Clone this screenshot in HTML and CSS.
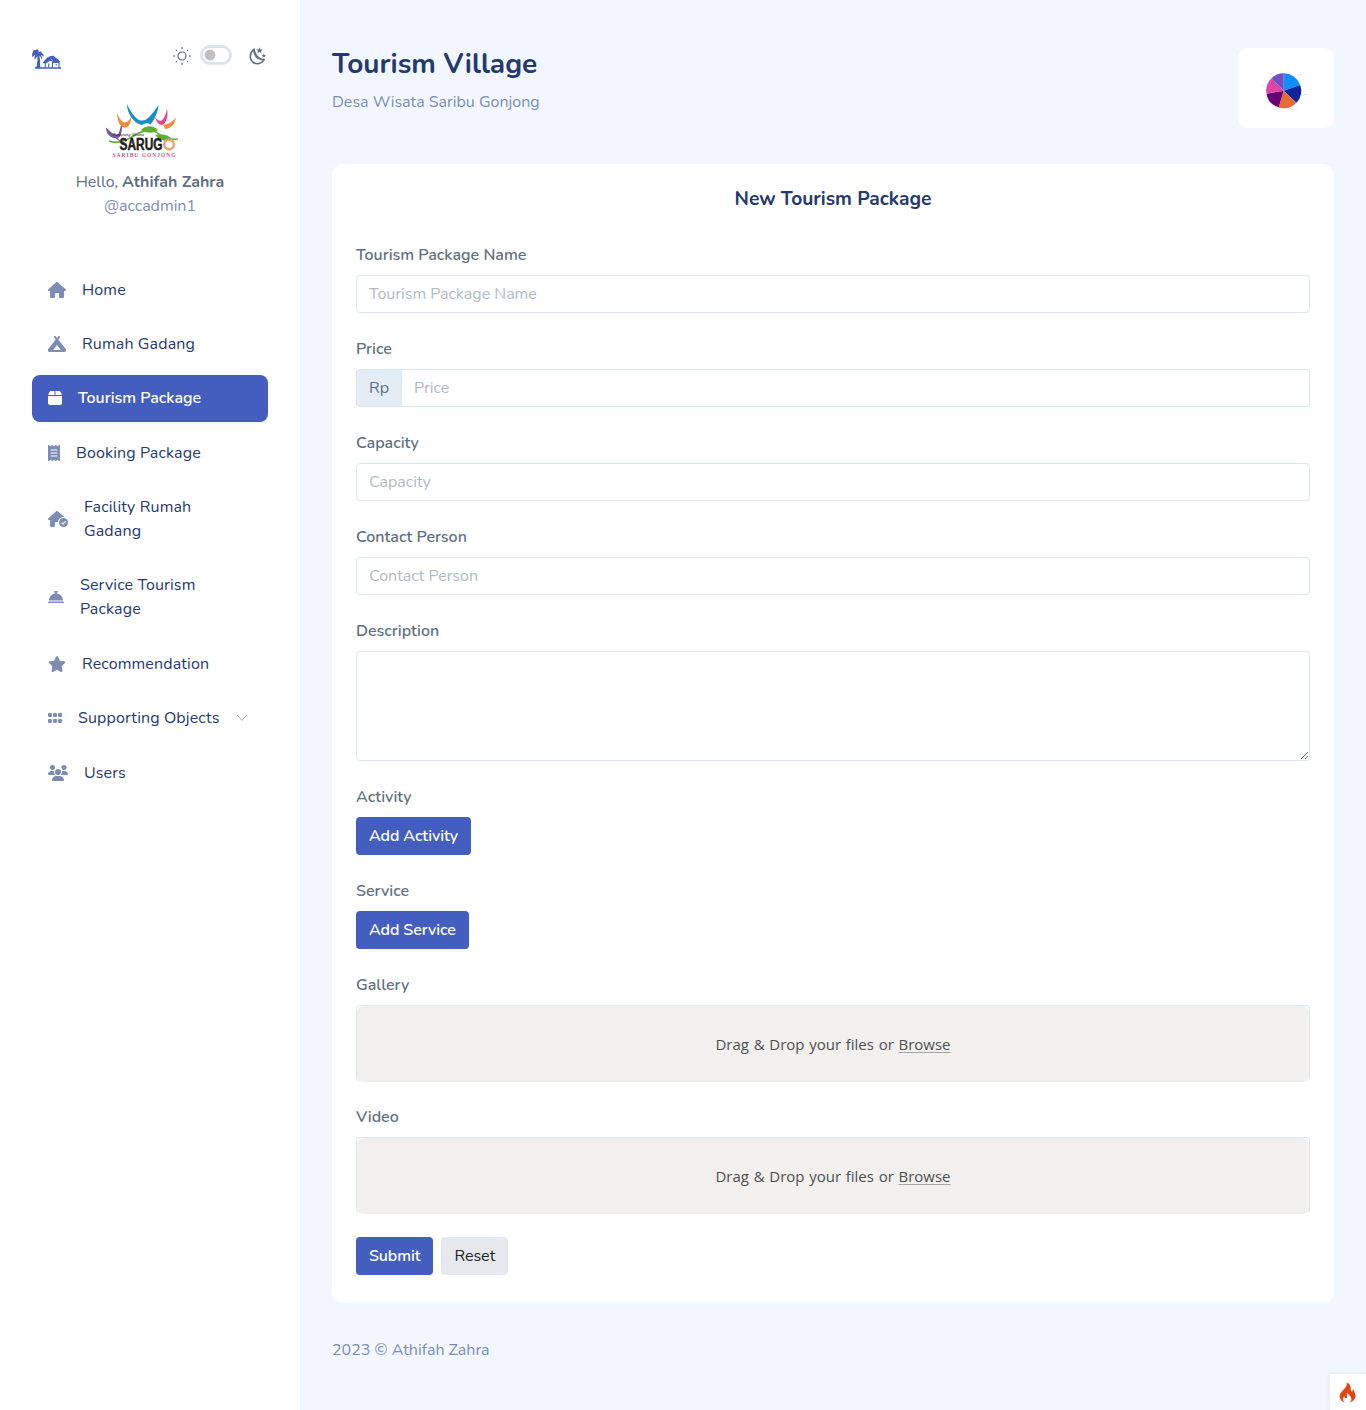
FILE: index.html
```html
<!DOCTYPE html>
<html lang="en">
<head>
<meta charset="utf-8">
<title>New Tourism Package</title>
<link rel="stylesheet" href="styles.css">
</head>
<body>
<div class="app">
  <aside class="sidebar">
    <div class="brand-row">
      <svg class="brand" width="30" height="20" viewBox="0 0 30 20">
        <path d="M6.500 3.500C7.500.3 5 0 3.600 1.200 2 .6.6 2 .9 3.400-.4 4.600-.2 6.800.8 8.600 1.300 7.200 2 6.300 3.400 5.800 2.300 7.500 2.300 9 2.900 10.800 3.600 9.200 4.600 8 5.300 7.200L5.600 11 4.500 18H3v1.800h26V18.300H8.300L8 11 7.300 6.800c1.300.6 2 2 2.300 3.600C10.400 9 10.200 7.300 9 6.200c1.200 0 2 .6 2.700 1.500C12 5.600 10.800 4.300 9.200 4.100 10.600 3 9.500 1.200 6.500 3.500Z"/>
        <path d="M11 13.200 15 8.800 18.500 7l2.800-.2L27.800 12v1.200H22l-3-3.900-4.800 4.900H11z"/>
        <path fill="none" stroke="#435ebe" stroke-width="1.100" d="M13.300 13v5.500M14 13.800l4.500-3.500 3.700 3.500M22 13.500h5V19M20.500 13v5.500M16.800 18.500v-4M24.200 15v1.500"/>
      </svg>
      <div class="theme">
        <svg width="20" height="20" viewBox="0 0 20 20" fill="none" stroke="#607080" stroke-width="1.200"><circle cx="10" cy="10" r="4"/><path d="M10 .9v2.300M10 16.800v2.300M.9 10h2.300M16.800 10h2.300M4 4l.9.9M15.100 15.100l.9.9M4 16l.9-.9M15.100 4.900 16 4"/></svg>
        <span class="switch"></span>
        <svg class="moon" width="18" height="18" viewBox="0 0 18 18"><path fill="none" stroke="#607080" stroke-width="1.600" stroke-linejoin="round" d="M5.300 2.200C4 8 8.500 13 15.300 12.600 12.800 16.800 7.500 18 3.700 15 .1 11.900.5 5.300 5.300 2.200ZM5.200 3.500C6 7.500 8.500 11 13 12.500"/><path fill="#607080" d="m10.500.3.9 2.100 2.300.2-1.700 1.500.5 2.200-2-1.200-2 1.200.5-2.200-1.700-1.500 2.300-.2zM14.800 6.500l.6 1.400 1.600.2-1.200 1 .4 1.500-1.400-.8-1.300.8.3-1.500-1.100-1 1.500-.2z"/></svg>
      </div>
    </div>
    <div class="profile">
      <svg width="76" height="56" viewBox="0 0 76 56">
        <path fill="#715aa8" d="M1 25.500C4 28 8 33 12 32.500 15 32 14.500 26 17 21 17 28 17 34.500 13 36 7 37.500 1 33 1 25.500ZM11 34l7 8-9-7z"/>
        <path fill="#f28b3c" d="M12 11C14 16 17 21 20.500 20.500 23 20 24 18 26 15.500 26 20 24.500 24.500 21 25.500 15 26.500 12 18 12 11Z"/>
        <path fill="#168fc9" d="M22 2C25 9 29 15 34 18c5 1.500 8-.5 11-4 3-3 5.500-7 8.500-11C53 11 49 18 45.500 22.500 43 20.500 40 21 37 23 28 21 22 11 22 2Z"/>
        <path fill="#e84586" d="M50 15c2 3 4 4.500 6.500 3.500C59 17 61 12 62 7c1.500 6-.5 14-4.500 16C54 23 51 20 50 15Z"/>
        <path fill="#f28b3c" d="M58 22.500C63 23 67 20 71 15.500 70 22 66 27 60 27z"/>
        <path fill="none" stroke="#61ae32" stroke-width="1.700" d="M4 39c10 4 20-2 28-7 11-6 18-5 24 2 4 4 10 4 17 3"/>
        <path fill="#61ae32" d="M36 28c5-5 12-5 17 0-3 3-11 4-17 0ZM50 33c8-2 14 0 18 5-7 2-14 0-18-5Z"/>
        <text class="logo-small" x="8" y="33.500" textLength="31" lengthAdjust="spacingAndGlyphs">Kampung Wisata</text>
        <text class="logo-name" x="14.500" y="48" textLength="43" lengthAdjust="spacingAndGlyphs">SARUG</text>
        <circle cx="64" cy="42.500" r="4.800" fill="none" stroke="#f2a070" stroke-width="2.500"/>
        <text class="logo-sub" x="7.500" y="54.500" textLength="63">SARIBU GONJONG</text>
      </svg>
      <p>Hello, <b>Athifah Zahra</b></p>
      <p class="muted">@accadmin1</p>
    </div>
    <nav class="menu">
      <a><svg width="18" height="16" viewBox="0 0 576 512"><path d="M575.800 255.500c0 18-15 32.100-32 32.100h-32l.7 160.200V472c0 22.100-17.900 40-40 40H392c-22.100 0-40-17.900-40-40v-88c0-17.700-14.300-32-32-32h-64c-17.700 0-32 14.300-32 32v88c0 22.100-17.900 40-40 40h-80c-22.100 0-40-17.900-40-40V287.600H32c-18 0-32-14-32-32.100 0-9 3-17 10-24L266.400 8c7-7 15-8 22-8s15 2 21 7l255.400 224.500c8 7 12 15 11 24z"/></svg><span>Home</span></a>
      <a><svg width="18" height="16" viewBox="0 0 576 512"><path d="M377 52c11-13.800 8.800-33.900-5-45s-33.900-8.800-45 5l-39 48.800L249 12c-11-13.800-31.200-16-45-5s-16 31.200-5 45l48 60L12.300 405.400C4.300 415.400 0 427.700 0 440.400V464c0 26.500 21.500 48 48 48h480c26.500 0 48-21.500 48-48v-23.600c0-12.700-4.300-25.100-12.300-35L329 112l48-60zM288 448H168.500L288 291.700 407.500 448H288z"/></svg><span>Rumah Gadang</span></a>
      <a class="active"><svg width="14" height="16" viewBox="0 0 448 512"><path d="M50.700 58.500 0 160h208V32H93.700c-18.200 0-34.800 10.300-43 26.500zM240 160h208L397.300 58.500c-8.200-16.200-24.800-26.500-43-26.500H240v128zm208 32H0v224c0 35.300 28.700 64 64 64h320c35.300 0 64-28.700 64-64V192z"/></svg><span>Tourism Package</span></a>
      <a><svg width="12" height="16" viewBox="0 0 384 512"><path d="M14 2.200C22.500-1.700 32.500-.3 39.600 5.800L80 40.400l40.400-34.600c9-7.700 22.300-7.700 31.200 0L192 40.400l40.400-34.600c9-7.700 22.300-7.700 31.200 0L304 40.400l40.400-34.600c7.100-6.100 17.100-7.500 25.600-3.600s14 12.400 14 21.800v464c0 9.400-5.500 17.900-14 21.800s-18.500 2.500-25.600-3.600L304 471.600l-40.400 34.600c-9 7.700-22.300 7.700-31.200 0L192 471.600l-40.400 34.600c-9 7.700-22.300 7.700-31.200 0L80 471.600l-40.400 34.600c-7.100 6.100-17.100 7.500-25.600 3.600S0 497.400 0 488V24C0 14.600 5.500 6.100 14 2.200zM96 144c-8.800 0-16 7.200-16 16s7.200 16 16 16h192c8.800 0 16-7.200 16-16s-7.200-16-16-16H96zM80 352c0 8.800 7.200 16 16 16h192c8.800 0 16-7.200 16-16s-7.200-16-16-16H96c-8.800 0-16 7.200-16 16zM96 240c-8.800 0-16 7.200-16 16s7.200 16 16 16h192c8.800 0 16-7.200 16-16s-7.200-16-16-16H96z"/></svg><span>Booking Package</span></a>
      <a class="narrow"><svg width="20" height="16" viewBox="0 0 640 512"><path d="M320 368c0-97 79-176 176-176 10 0 20 1 30 3L309 7c-13-10-29-10-42 0L10 231c-18 18-9 57 22 57h32v184c0 22 18 40 40 40h80c22 0 40-18 40-40v-88c0-18 14-32 32-32h64z"/><path fill-rule="evenodd" d="M496 224a144 144 0 1 1 0 288 144 144 0 1 1 0-288Zm56 97-72 72-33-33-23 23 56 56 95-95z"/></svg><span>Facility Rumah Gadang</span></a>
      <a><svg width="16" height="16" viewBox="0 0 512 512"><path d="M216 64c-13.300 0-24 10.700-24 24s10.700 24 24 24h16v33.300C119.600 157.200 32 252.400 32 368h448c0-115.600-87.600-210.800-200-222.700V112h16c13.300 0 24-10.700 24-24s-10.700-24-24-24h-80zM24 400c-13.300 0-24 10.700-24 24s10.700 24 24 24h464c13.300 0 24-10.700 24-24s-10.700-24-24-24H24z"/></svg><span>Service Tourism Package</span></a>
      <a><svg width="18" height="16" viewBox="0 0 576 512"><path d="M316.900 18C311.600 7 300.400 0 288.100 0s-23.400 7-28.800 18L195 150.300 51.400 171.500c-12 1.800-22 10.200-25.700 21.700s-.7 24.200 7.900 32.700L137.800 329l-24.600 145.700c-2 12 3 24.200 12.900 31.300s23 8 33.800 2.300l128.300-68.500 128.300 68.500c10.800 5.700 23.900 4.900 33.800-2.300s14.900-19.300 12.900-31.300L438.500 329l104.200-103.100c8.600-8.500 11.700-21.200 7.900-32.700s-13.700-19.900-25.700-21.700l-143.700-21.200L316.900 18z"/></svg><span>Recommendation</span></a>
      <a><svg width="14" height="16" viewBox="0 0 448 512"><rect y="96" width="128" height="128" rx="40"/><rect x="160" y="96" width="128" height="128" rx="40"/><rect x="320" y="96" width="128" height="128" rx="40"/><rect y="288" width="128" height="128" rx="40"/><rect x="160" y="288" width="128" height="128" rx="40"/><rect x="320" y="288" width="128" height="128" rx="40"/></svg><span>Supporting Objects</span><svg class="chevron" width="12" height="12" viewBox="0 0 12 12"><path d="m1 3 5 5.300L11 3"/></svg></a>
      <a><svg width="20" height="16" viewBox="0 0 640 512"><path d="M144 0a80 80 0 1 1 0 160A80 80 0 1 1 144 0zM512 0a80 80 0 1 1 0 160A80 80 0 1 1 512 0zM0 298.700C0 239.800 47.800 192 106.700 192h42.700c15.900 0 31 3.500 44.600 9.700-1.300 7.200-1.900 14.700-1.900 22.300 0 38.200 16.800 72.500 43.300 96H21.300C9.600 320 0 310.400 0 298.700zM405.300 320c26-23.500 42.600-57.800 42.600-96 0-7.600-.7-15-1.900-22.300 13.600-6.300 28.700-9.700 44.600-9.700h42.700C592.200 192 640 239.800 640 298.700c0 11.800-9.600 21.300-21.300 21.300H405.300zM224 224a96 96 0 1 1 192 0 96 96 0 1 1-192 0zM128 485.300C128 411.700 187.700 352 261.300 352h117.400C452.300 352 512 411.700 512 485.300c0 14.700-11.900 26.700-26.700 26.700H154.700c-14.700 0-26.700-11.900-26.700-26.700z"/></svg><span>Users</span></a>
    </nav>
  </aside>
  <main class="main">
    <header class="heading">
      <div>
        <h3>Tourism Village</h3>
        <p class="muted">Desa Wisata Saribu Gonjong</p>
      </div>
      <div class="chart">
        <svg width="96" height="80" viewBox="0 0 96 80">
          <g transform="translate(45.700 42.700)">
            <path fill="#118dff" d="M0 0V-17.500A17.500 17.500 0 0 1 16.500-5.800Z"/>
            <path fill="#12239e" d="M0 0 16.500-5.800A17.500 17.500 0 0 1 12.700 12Z"/>
            <path fill="#e66c37" d="M0 0 12.700 12A17.500 17.500 0 0 1-5 16.800Z"/>
            <path fill="#6b007b" d="M0 0-5 16.800A17.500 17.500 0 0 1-17.200 3Z"/>
            <path fill="#e044a7" d="M0 0-17.200 3A17.500 17.500 0 0 1-12.500-12.200Z"/>
            <path fill="#744ec2" d="M0 0-12.500-12.200A17.500 17.500 0 0 1 0-17.500Z"/>
            <path stroke="#e4e4e4" stroke-width=".8" d="M12-15.800h7M19 3.700h6M5 18.500h8M-15-17.300h6M-21.500-5h3"/>
          </g>
        </svg>
      </div>
    </header>
    <section class="card">
      <h4>New Tourism Package</h4>
      <form>
        <div class="group"><label>Tourism Package Name</label><input type="text" placeholder="Tourism Package Name"></div>
        <div class="group"><label>Price</label><div class="input-group"><span class="prefix">Rp</span><input type="text" placeholder="Price"></div></div>
        <div class="group"><label>Capacity</label><input type="text" placeholder="Capacity"></div>
        <div class="group"><label>Contact Person</label><input type="text" placeholder="Contact Person"></div>
        <div class="group"><label>Description</label><textarea></textarea></div>
        <div class="group"><label>Activity</label><button type="button" class="btn primary">Add Activity</button></div>
        <div class="group"><label>Service</label><button type="button" class="btn primary">Add Service</button></div>
        <div class="group"><label>Gallery</label><div class="drop"><div class="panel">Drag &amp; Drop your files or <u>Browse</u></div></div></div>
        <div class="group"><label>Video</label><div class="drop"><div class="panel">Drag &amp; Drop your files or <u>Browse</u></div></div></div>
        <div class="actions"><button type="button" class="btn primary">Submit</button><button type="button" class="btn light">Reset</button></div>
      </form>
    </section>
    <footer class="muted">2023 © Athifah Zahra</footer>
  </main>
</div>
<div class="debug">
  <svg width="17" height="21" viewBox="0 0 17 21"><path fill="#dd4814" d="M7.500.5c1 3-1 5-3 7.200C2.300 10 .6 11.700.6 14.200c0 3 2 5 5 6.200-2-2-2.200-4-.4-6.100.2 1.200.8 1.900 1.700 2 1.600.1 1.400-1.500 1-2.800-.3-1.200.2-2 1-2.600.1 2 3.700 3.400 3.500 6.200 0 1.500-.9 2.600-1.900 3.300 3.500-1 6-3.300 6-6.700 0-3.200-2-4.300-2.300-6.700-.9.8-1 1.700-.7 2.800-1.500-.5-2-2-1.800-3.700C12 3.500 10 1.300 7.500.5Z"/></svg>
</div>
</body>
</html>
```
FILE: styles.css
```css
*{box-sizing:border-box}
body{margin:0;background:#f2f7ff;color:#607080;font:400 16px/24px Nunito,Lato,sans-serif}
p,h3,h4{margin:0}
svg{display:block;flex:none}
.app{display:flex;min-height:1410px}
.sidebar{width:300px;background:#fff;padding:44px 32px 0}
.brand-row{display:flex;justify-content:space-between;height:28px}
.brand{fill:#435ebe;margin-top:5px}
.theme{display:flex}
.theme svg{margin-top:2px}
.switch{width:32px;height:20px;margin:1px 16px 0 8px;border:3px solid #dfe2eb;border-radius:10px;background:radial-gradient(circle at 7px 7px,#bfbfbf 5px,transparent 5.800px)}
.theme .moon{margin:3px 1px 0 1px}
.profile{display:flex;flex-direction:column;align-items:center;padding-top:30px}
.profile svg{margin:0 14px 12px 0}
.logo-small{font:italic 5px "Liberation Serif",serif;fill:#222}
.logo-name{font:700 16px "Liberation Sans",sans-serif;fill:#1e1e1e;stroke:#1e1e1e;stroke-width:.5px}
.logo-sub{font:700 5.500px "Liberation Serif",serif;fill:#dc4b83}
.muted{color:#7c8db5}
.menu{display:flex;flex-direction:column;gap:8px;margin-top:48.400px}
.menu a{display:flex;align-items:center;gap:16px;padding:11.200px 16px;color:#25396f;border-radius:8px;letter-spacing:.13px}
.menu a.narrow{padding-right:40px}
.menu svg{fill:#7c8db5}
.menu a.active{background:#435ebe;color:#fff;font-weight:600;letter-spacing:0}
.menu .active svg{fill:#fff}
.menu .chevron{fill:none;stroke:#aaa;stroke-width:1;margin-left:1px}
.main{flex:1;padding:48px 32px 0}
.heading{display:flex;justify-content:space-between;height:116px}
h3{font-size:28px;line-height:33.600px;font-weight:700;color:#25396f;margin-bottom:8px}
.chart{width:96px;height:80px;background:#fff;border-radius:11px}
.card{background:#fff;border-radius:11px;height:1139px;padding:24px 24px 0}
h4{font-size:19.200px;line-height:23px;text-align:center;color:#25396f;margin-bottom:32px}
.group{margin-bottom:24px}
label{display:block;font-weight:600;margin-bottom:8px}
input,textarea{display:block;width:100%;font:inherit;color:#607080;background:#fff;border:1px solid #dce7f1;border-radius:4px;padding:6px 12px;outline:0}
input{height:38px}
input::placeholder{color:#b2bac1;opacity:1}
textarea{height:110px;resize:vertical}
.input-group{display:flex}
.prefix{height:38px;padding:6px 12px;line-height:24px;background:#e4edf5;border:1px solid #dce7f1;border-right:0;border-radius:4px 0 0 4px}
.input-group input{border-radius:0 4px 4px 0;flex:1}
.btn{display:block;height:38px;padding:6px 12px;border:1px solid transparent;border-radius:4px;font:600 16px/24px Nunito,Lato,sans-serif;letter-spacing:-.12px}
.primary{background:#435ebe;color:#fff}
.light{background:#e6e8ee;color:#212529;font-weight:400;letter-spacing:0}
.drop{height:76px;border:1px solid #dce7f1;border-bottom:0;border-radius:4px}
.panel{height:76px;border-radius:6px;background:#f1f0ef;color:#4f4f4f;display:flex;justify-content:center;align-items:center;white-space:pre;font:15px "Open Sans",sans-serif;word-spacing:.8px}
.panel u{text-decoration-color:#a7a4a4;text-underline-offset:2px}
.actions{display:flex;gap:8px}
footer{margin-top:35px}
.debug{position:fixed;right:0;bottom:0;width:36px;height:36px;background:#fff;box-shadow:0 0 4px #dfdfdf;padding:8px 0 0 9px}
```
